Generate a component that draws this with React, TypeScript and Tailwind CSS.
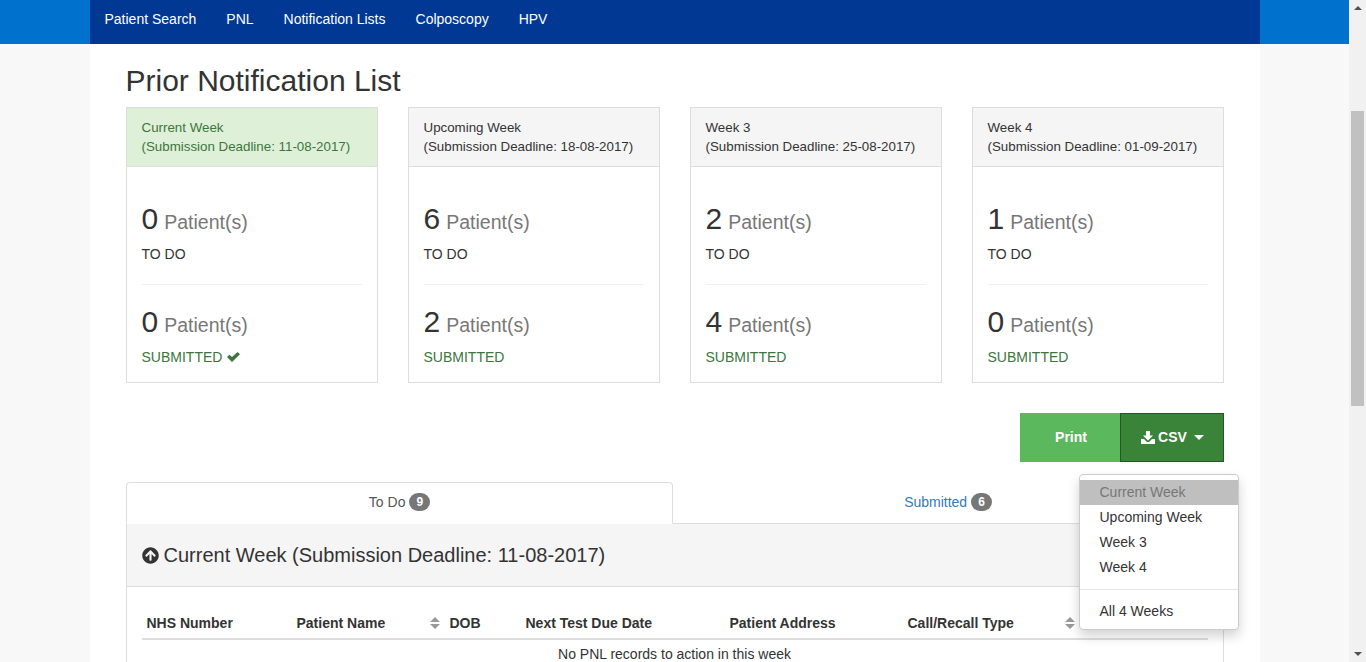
import { FaArrowCircleUp } from "react-icons/fa";

const navItems = ["Patient Search", "PNL", "Notification Lists", "Colposcopy", "HPV"];

const weeks = [
  { title: "Current Week", deadline: "11-08-2017", todo: 0, submitted: 0, current: true },
  { title: "Upcoming Week", deadline: "18-08-2017", todo: 6, submitted: 2, current: false },
  { title: "Week 3", deadline: "25-08-2017", todo: 2, submitted: 4, current: false },
  { title: "Week 4", deadline: "01-09-2017", todo: 1, submitted: 0, current: false },
];

const columns = [
  { label: "NHS Number", width: "w-[150px]", sortable: false },
  { label: "Patient Name", width: "w-[153px]", sortable: true },
  { label: "DOB", width: "w-[76px]", sortable: false },
  { label: "Next Test Due Date", width: "w-[204px]", sortable: false },
  { label: "Patient Address", width: "w-[178px]", sortable: false },
  { label: "Call/Recall Type", width: "w-[177px]", sortable: true },
  { label: "", width: "w-[128px]", sortable: false },
];

const SortIcon = () => (
  <svg width="10" height="12" viewBox="0 0 10 12" className="shrink-0">
    <path d="M5 0 L10 5 H0 Z M0 7 H10 L5 12 Z" fill="#999999" />
  </svg>
);

const SaveIcon = () => (
  <svg width="14" height="13" viewBox="0 0 14 13">
    <path d="M5 0 H9 V4.5 H12 L7 9.5 L2 4.5 H5 Z" fill="#ffffff" />
    <path d="M0 8 H3 L6 11 H8 L11 8 H14 V13 H0 Z" fill="#ffffff" />
  </svg>
);

const CheckIcon = () => (
  <svg width="13" height="10" viewBox="0 0 13 10">
    <path d="M0 5 L2.5 2.7 L5 5.1 L10.5 0 L13 2.3 L5 10 Z" fill="#3c763d" />
  </svg>
);

const Badge = ({ value }: { value: number }) => (
  <span className="inline-block min-w-[10px] rounded-[10px] bg-[#777777] px-[7px] py-[3px] text-center align-middle text-[12px] font-bold leading-[12px] text-white">
    {value}
  </span>
);

const Count = ({ value }: { value: number }) => (
  <div className="flex h-[33px] items-baseline text-[30px] leading-[33px] text-[#333333]">
    {value}
    <span className="ml-[6px] text-[19.5px] text-[#777777]">Patient(s)</span>
  </div>
);

export default function App() {
  return (
    <div className="flex h-[662px] overflow-hidden bg-[#f8f8f8] font-['Liberation_Sans',Arial,sans-serif] text-[14px] leading-[20px] text-[#333333]">
      <div className="flex-1 min-w-0">
        {/* top bar */}
        <div className="h-[44px] bg-[#0072ce]">
          <nav className="mx-auto flex h-[44px] w-[1170px] bg-[#003893]">
            {navItems.map((item) => (
              <a key={item} className="h-[44px] px-[15px] pt-[9px] text-white">
                {item}
              </a>
            ))}
          </nav>
        </div>

        <main className="mx-auto h-[618px] w-[1170px] bg-white px-[36px] pt-[20px]">
          <h1 className="mb-[10px] text-[30px] font-normal leading-[33px]">Prior Notification List</h1>

          {/* week summary cards */}
          <div className="grid grid-cols-4 gap-[30px]">
            {weeks.map((week) => (
              <div key={week.title} className="h-[276px] border border-[#dddddd]">
                <div
                  className={
                    week.current
                      ? "h-[59px] whitespace-nowrap border-b border-[#dddddd] bg-[#dff0d8] px-[15px] py-[10px] text-[13.33px] leading-[19px] text-[#3c763d]"
                      : "h-[59px] whitespace-nowrap border-b border-[#dddddd] bg-[#f5f5f5] px-[15px] py-[10px] text-[13.33px] leading-[19px] text-[#333333]"
                  }
                >
                  {week.title}
                  <br />
                  (Submission Deadline: {week.deadline})
                </div>
                <div className="px-[15px] pt-[35px]">
                  <Count value={week.todo} />
                  <div className="mt-[9px] h-[20px]">TO DO</div>
                  <div className="mt-[20px] border-t border-[#eeeeee]" />
                  <div className="mt-[20px]">
                    <Count value={week.submitted} />
                  </div>
                  <div className="mt-[9px] flex h-[20px] items-center gap-[5px] text-[#3c763d]">
                    SUBMITTED
                    {week.current && <CheckIcon />}
                  </div>
                </div>
              </div>
            ))}
          </div>

          {/* print / csv */}
          <div className="relative mt-[30px] flex justify-end">
            <button className="h-[49px] w-[100px] border border-[#5cb85c] bg-[#5cb85c] pb-[1px] pl-[3px] font-bold text-white">
              Print
            </button>
            <button className="flex h-[49px] w-[104px] items-center justify-center gap-[3px] border border-[#255625] bg-[#398439] pb-[1px] pl-[2px] font-bold text-white">
              <SaveIcon />
              CSV
              <span className="ml-[4px] h-0 w-0 border-x-[5px] border-t-[5px] border-x-transparent border-t-white" />
            </button>

            <div className="absolute right-[-15px] top-[61px] z-10 w-[160px] rounded-[4px] border border-[#cccccc] bg-white py-[5px] shadow-[0_6px_12px_rgba(0,0,0,0.175)]">
              <div className="h-[25px] bg-[#bfbfbf] px-[20px] leading-[25px] text-[#777777]">Current Week</div>
              <div className="h-[25px] px-[20px] leading-[25px]">Upcoming Week</div>
              <div className="h-[25px] px-[20px] leading-[25px]">Week 3</div>
              <div className="h-[25px] px-[20px] leading-[25px]">Week 4</div>
              <div className="my-[9px] border-t border-[#e5e5e5]" />
              <div className="h-[25px] px-[20px] leading-[25px]">All 4 Weeks</div>
            </div>
          </div>

          {/* tabs */}
          <div className="mt-[20px] flex h-[42px] border-b border-[#dddddd]">
            <div className="flex h-[42px] w-[547px] items-center justify-center gap-[4px] rounded-t-[4px] border border-b-white border-[#dddddd] bg-white pb-[2px] pl-[1px] text-[#555555]">
              To Do <Badge value={9} />
            </div>
            <div className="flex h-[41px] flex-1 items-center justify-center gap-[4px] pb-[2px] text-[#337ab7]">
              Submitted <Badge value={6} />
            </div>
          </div>

          <div className="border-x border-[#dddddd]">
            <div className="flex h-[63px] items-center gap-[5px] border-b border-[#dddddd] bg-[#f5f5f5] px-[15px] text-[20px]">
              <FaArrowCircleUp className="h-[17px] w-[17px] text-[#333333]" />
              Current Week (Submission Deadline: 11-08-2017)
            </div>
            <div className="px-[15px] pt-[26px]">
              <table className="w-full table-fixed border-collapse">
                <thead>
                  <tr className="border-b-2 border-[#dddddd]">
                    {columns.map((col) => (
                      <th key={col.label} className={`${col.width} h-[25px] px-[5px] pb-[5px] text-left font-bold`}>
                        <div className="flex items-center justify-between">
                          <span className="whitespace-nowrap">{col.label}</span>
                          {col.sortable && <SortIcon />}
                        </div>
                      </th>
                    ))}
                  </tr>
                </thead>
                <tbody>
                  <tr>
                    <td colSpan={7} className="px-[5px] pt-[4px] text-center">
                      No PNL records to action in this week
                    </td>
                  </tr>
                </tbody>
              </table>
            </div>
          </div>
        </main>
      </div>

      {/* scrollbar */}
      <div className="flex h-[662px] w-[17px] shrink-0 flex-col items-center bg-[#f1f1f1]">
        <div className="mt-[6px] h-0 w-0 border-x-[4px] border-b-[4px] border-x-transparent border-b-[#505050]" />
        <div className="mt-[101px] h-[295px] w-[13px] bg-[#c1c1c1]" />
        <div className="mt-auto mb-[6px] h-0 w-0 border-x-[4px] border-t-[4px] border-x-transparent border-t-[#505050]" />
      </div>
    </div>
  );
}
